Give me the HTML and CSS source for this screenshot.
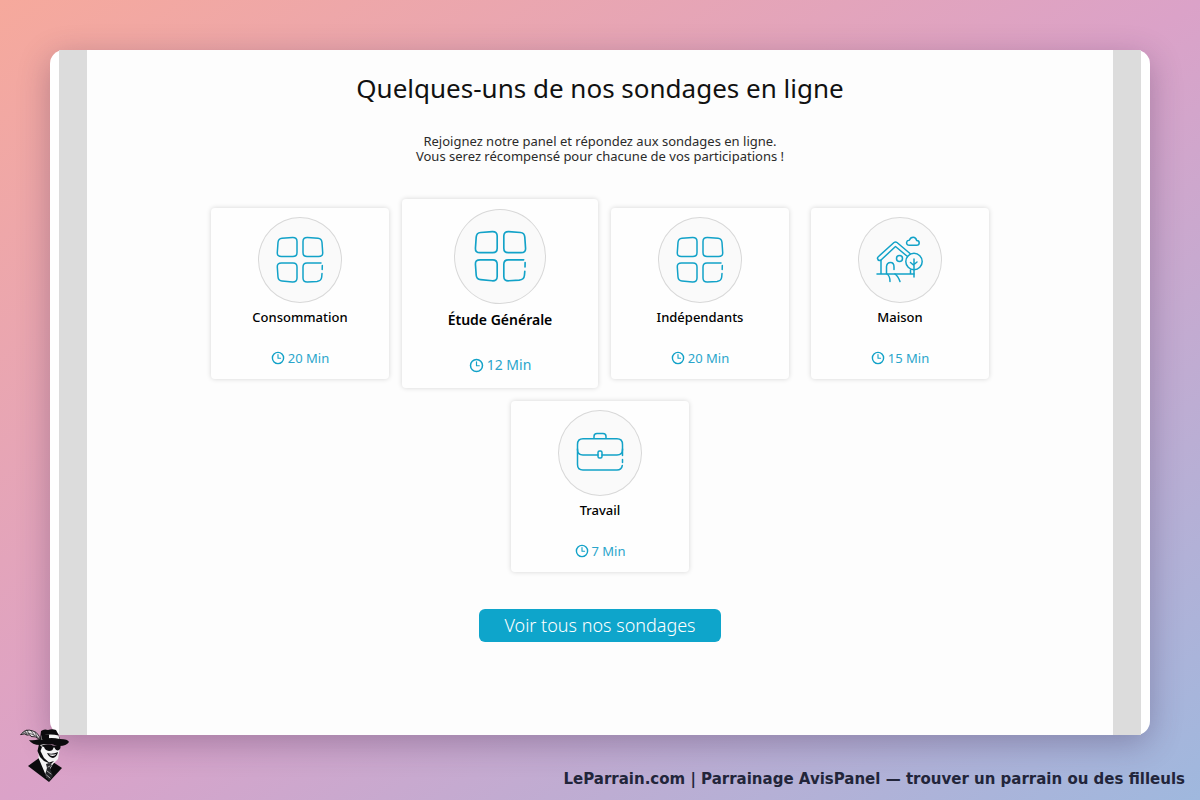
FILE: index.html
```html
<!DOCTYPE html>
<html lang="fr">
<head>
<meta charset="utf-8">
<meta name="viewport" content="width=device-width, initial-scale=1">
<title>Parrainage AvisPanel</title>
<link rel="stylesheet" href="styles.css">
</head>
<body>
<svg class="sprite" aria-hidden="true">
  <symbol id="clock" viewBox="0 0 14 14">
    <circle cx="7" cy="7" r="5.6" stroke-width="1.4"/><path d="M7 3.6V7.2H9.6" stroke-width="1.1"/>
  </symbol>
  <symbol id="squares" viewBox="0 0 48 48">
    <path d="M6 2.300L16.500 1.500Q21 1.300 21 5.500V16.500Q21 20.500 17 20.500H5.500Q1 20.500 1.300 16.500L2 6.500Q2.300 2.600 6 2.300Z"/>
    <path d="M42 2.300L31.500 1.500Q27 1.300 27 5.500V16.500Q27 20.500 31 20.500H42.500Q47 20.500 46.700 16.500L46 6.500Q45.700 2.600 42 2.300Z"/>
    <path d="M6 45L16.500 46Q21 46.200 21 42V31Q21 27 17 27H5.500Q1 27 1.300 31L2 41Q2.300 44.700 6 45Z"/>
    <path d="M45 27H31Q27 27 27 31V42Q27 46.200 31.500 46L41 45.400Q45.300 45 45.700 41L46 37.500M46.300 29.500L46.200 33.500"/>
  </symbol>
  <symbol id="house" viewBox="0 0 48 48">
    <path d="M4.500 24.500L19.500 10.500L31.500 20.500M4.500 24.500Q2 25 1.500 22.500Q1.300 21.600 2.300 20.700L18 6.500Q19.500 5.500 21 6.500L34 17.500"/>
    <path d="M5 24V38M1 38H38M34.500 34V38M10.500 38V30.500Q11 26.500 14.500 26.500Q18 26.500 18 31V33.500"/>
    <circle cx="23.500" cy="22.500" r="3"/><circle cx="38" cy="25.500" r="8.200"/>
    <path d="M38 23V41M38 29.500L34.500 26.500M38 28.500L41 26M11 38Q14 40 14 45.500M19 38Q22 40 24 45.500"/>
    <path d="M33.500 9.300Q30.300 9 30.600 6.300Q31 4.200 33.300 4.300Q34.500 1.300 37.200 1.300Q39.800 1.300 40.700 4.500Q43.200 4.500 43.200 7Q43.200 9.300 40.500 9.300Z"/>
  </symbol>
  <symbol id="briefcase" viewBox="0 0 48 48">
    <path d="M18 9V7.500Q18 4.500 21 4.500H27Q30 4.500 30 7.500V9"/>
    <path d="M22 26H7Q1.500 26 1.500 20.500V15.500Q1.500 9.800 7 9.800H41Q46.500 9.800 46.500 15.500V20.500Q46.500 26 41 26H26"/>
    <path d="M1.500 20V35.500Q1.500 41 7 41H41Q45.500 41 46.300 36.500M46.500 20V26.500M46.500 30.500V33.500"/>
    <rect x="22" y="22" width="4" height="7" rx="1.500"/>
  </symbol>
</svg>
<main class="panel">
  <section class="content">
    <h1 class="title">Quelques-uns de nos sondages en ligne</h1>
    <p class="intro">Rejoignez notre panel et répondez aux sondages en ligne.<br>Vous serez récompensé pour chacune de vos participations !</p>
    <div class="cards">
      <article class="card">
        <span class="disc"><svg class="picture"><use href="#squares"/></svg></span>
        <h2 class="name">Consommation</h2>
        <p class="time"><svg class="clock"><use href="#clock"/></svg>20 Min</p>
      </article>
      <article class="card featured">
        <span class="disc"><svg class="picture"><use href="#squares"/></svg></span>
        <h2 class="name">Étude Générale</h2>
        <p class="time"><svg class="clock"><use href="#clock"/></svg>12 Min</p>
      </article>
      <article class="card">
        <span class="disc"><svg class="picture"><use href="#squares"/></svg></span>
        <h2 class="name">Indépendants</h2>
        <p class="time"><svg class="clock"><use href="#clock"/></svg>20 Min</p>
      </article>
      <article class="card">
        <span class="disc"><svg class="picture"><use href="#house"/></svg></span>
        <h2 class="name">Maison</h2>
        <p class="time"><svg class="clock"><use href="#clock"/></svg>15 Min</p>
      </article>
      <article class="card">
        <span class="disc"><svg class="picture"><use href="#briefcase"/></svg></span>
        <h2 class="name">Travail</h2>
        <p class="time"><svg class="clock"><use href="#clock"/></svg>7 Min</p>
      </article>
    </div>
    <button class="more" type="button">Voir tous nos sondages</button>
  </section>
</main>
<footer class="footer">
  <svg class="logo" viewBox="0 0 50 56" role="img" aria-label="LeParrain">
    <path fill="#0b0b0d" d="M19 31L8 39L29 55L42 41L33 35Z"/>
    <path fill="#f4f4f4" d="M19 16L18.500 31L27 51L29 44L33 37L38 32L40 20Z"/>
    <path fill="#26262a" d="M26 37L29 36L32 38L30 41L33 49L29 54L25 48L27 41Z"/>
    <path fill="none" stroke="#ddd" stroke-width=".7" d="M27 44L31 47M26.500 48L30 51M28 40L30 39"/>
    <path fill="#0b0b0d" d="M19 17L22 20L20.500 24L24 31L29 35.500L34 34L31 37L24 34L20 30L17.500 24Z"/>
    <path fill="#0b0b0d" d="M20 12L21 4Q24 1.500 28 3Q32 1.500 36 3Q38 6 40 12Q48 12 49 15Q46 19.500 38 19Q29 15.500 20 18Q12 18 9 13Q13 14 20 12Z"/>
    <path fill="#f4f4f4" d="M21.500 8.500Q31 6.500 38.500 8.500L39.500 12Q31 10 21 12.500Z"/>
    <path fill="#0b0b0d" d="M21.500 7.500H29L29 12H21.500Z"/>
    <path fill="#0b0b0d" d="M23 18Q29 16.500 33 18.500L35 18.500Q38 17.500 40.500 18.500Q41 22.500 38 23.500Q35.500 23.500 34.500 20.500L33.500 20.500Q33 24 29 24Q25 23.500 24 20L21 19Z"/>
    <path fill="#0b0b0d" d="M27 26Q32 28 38 25Q37 30 33 31Q29 30.500 27 26Z"/>
    <path fill="#fff" d="M29 27.200Q33 28.200 36.500 26.700Q35 29 32.500 29Q30 29 29 27.200Z"/>
    <path fill="#e4dfe4" stroke="#17171a" stroke-width=".9" d="M1 7.500Q5 1 13 4Q19 6 20.500 13Q15 8.500 11 9.500Q11 7 7 8Q5 6 1 7.500Z"/>
    <path fill="none" stroke="#17171a" stroke-width=".6" d="M3 6Q12 5 20 12M7 3L9 7M11 3.500L14 8M15 5L17 10M5 4L7 8"/>
  </svg>
  <p class="caption">LeParrain.com | Parrainage AvisPanel — trouver un parrain ou des filleuls</p>
</footer>
</body>
</html>
```
FILE: styles.css
```css
* { box-sizing: border-box; }

body {
  margin: 0;
  min-height: 100vh;
  padding: 50px 50px 0;
  display: flex;
  flex-direction: column;
  font-family: "Noto Sans", "Open Sans", sans-serif;
  color: #111;
  background: linear-gradient(to bottom right, #f6a99c 0%, #dba2c8 50%, #9fb8de 100%);
}

h1, h2, p { margin: 0; }

.sprite { position: absolute; width: 0; height: 0; }

svg { fill: none; stroke: #12a2c8; stroke-width: 1.500; stroke-linecap: round; stroke-linejoin: round; }

.logo { stroke: none; }

.panel {
  flex: 1;
  display: flex;
  padding: 0 9px;
  border-radius: 14px;
  background: #fff;
  box-shadow: 0 8px 32px rgba(50, 30, 70, 0.3);
}

.content {
  flex: 1;
  padding: 20px 20px 92px;
  display: flex;
  flex-direction: column;
  align-items: center;
  border: solid #dcdcdc;
  border-width: 0 28px;
  background: #fdfdfd;
}

.title { font-size: 26px; line-height: 36px; font-weight: 450; text-align: center; }

.intro { margin-top: 28px; font-size: 13px; line-height: 15px; text-align: center; color: #2b2b2b; }

.cards {
  margin-top: 44px;
  display: flex;
  flex-wrap: wrap;
  justify-content: center;
  gap: 22px;
  max-width: 840px;
}

.card {
  width: 178px;
  height: 171px;
  padding-top: 9px;
  display: flex;
  flex-direction: column;
  align-items: center;
  border-radius: 4px;
  background: #fefefe;
  box-shadow: 0 0 5px rgba(0, 0, 0, 0.16);
}

.disc {
  width: 84px;
  height: 86px;
  display: grid;
  place-items: center;
  border: 1px solid #d8d8d8;
  border-radius: 50%;
  background: #fafafa;
}

.picture { width: 48px; height: 48px; }

.name { margin-top: 4px; font-size: 13px; line-height: 20px; font-weight: 500; color: #000; }

.time {
  margin-top: 21px;
  display: flex;
  align-items: center;
  gap: 3px;
  font-size: 13px;
  line-height: 20px;
  color: #2aa5cb;
}

.clock { width: 14px; height: 14px; }

.featured { width: 196px; height: 189px; margin: -9px; padding-top: 10px; }
.featured .disc { width: 92px; height: 95px; }
.featured .picture { width: 53px; height: 53px; }
.featured .name { margin-top: 5px; font-size: 14px; line-height: 22px; font-weight: 600; }
.featured .time { margin-top: 23px; font-size: 14px; line-height: 22px; }
.featured .clock { width: 15px; height: 15px; }

.more {
  margin-top: 37px;
  padding: 0 25px;
  border: 0;
  border-radius: 6px;
  font: 300 18px/33px "Noto Sans", "Open Sans", sans-serif;
  color: #fff;
  background: #0ea5cb;
}

.footer {
  height: 65px;
  margin: 0 -35px 0 -30px;
  display: flex;
  justify-content: space-between;
  align-items: flex-end;
  padding-bottom: 11px;
}

.logo { width: 50px; height: 56px; margin-bottom: 6px; }

.caption { font: bold 15px/20px "DejaVu Sans", sans-serif; color: #22253a; }
```
